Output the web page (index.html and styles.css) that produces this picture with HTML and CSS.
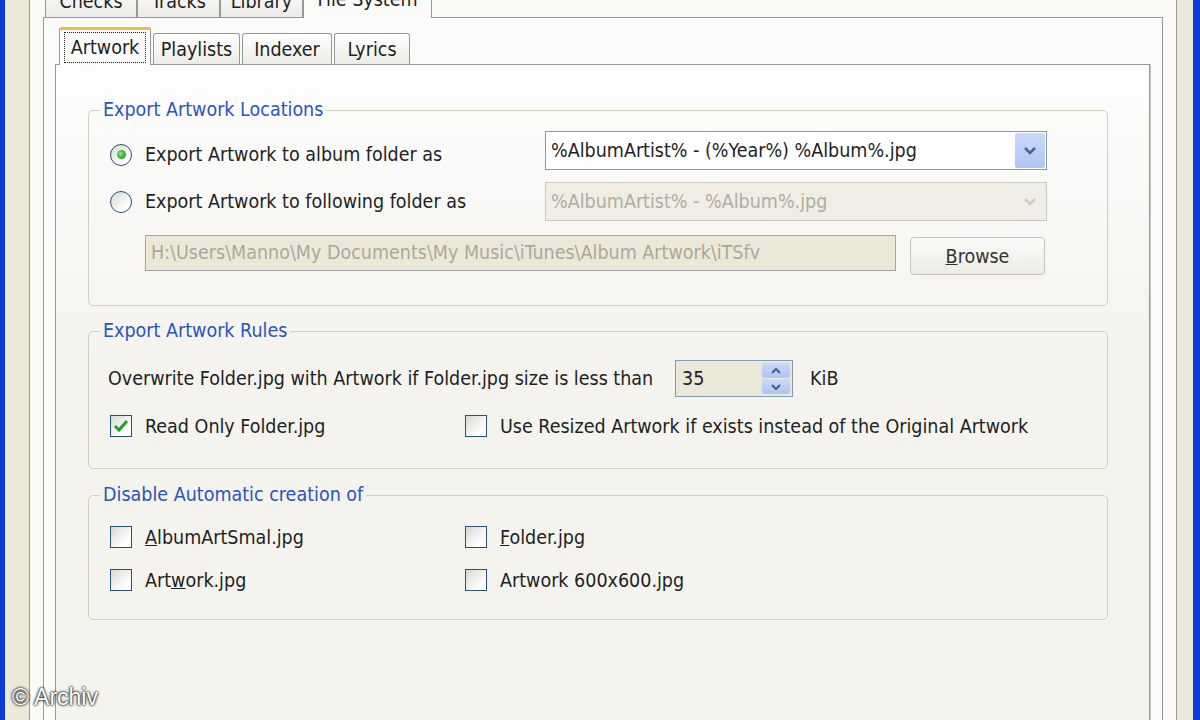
FILE: index.html
```html
<!DOCTYPE html>
<html>
<head>
<title>Options - File System</title>
<link rel="stylesheet" href="styles.css">
</head>
<body>

<div class="window">
  <div class="frame">

    <div class="tabs outer-tabs">
      <div class="tab">Checks</div>
      <div class="tab">Tracks</div>
      <div class="tab">Library</div>
      <div class="tab active">File System</div>
    </div>

    <div class="outer-panel">

      <div class="tabs inner-tabs">
        <div class="tab active"><span class="focus">Artwork</span></div>
        <div class="tab">Playlists</div>
        <div class="tab">Indexer</div>
        <div class="tab">Lyrics</div>
      </div>

      <div class="inner-panel">

        <fieldset class="group group-locations">
          <legend>Export Artwork Locations</legend>
          <div class="locations">
            <label class="option first">
              <span class="radio checked"></span>
              Export Artwork to album folder as
            </label>
            <div class="combo">
              <span class="combo-text">%AlbumArtist% - (%Year%) %Album%.jpg</span>
              <span class="combo-btn">
                <svg width="14" height="10" viewBox="0 0 14 10"><path d="M2 2 L7 7 L12 2" fill="none" stroke="#4d6185" stroke-width="2.6"/></svg>
              </span>
            </div>

            <label class="option">
              <span class="radio"></span>
              Export Artwork to following folder as
            </label>
            <div class="combo disabled">
              <span class="combo-text">%AlbumArtist% - %Album%.jpg</span>
              <span class="combo-btn">
                <svg width="14" height="10" viewBox="0 0 14 10"><path d="M2 2 L7 7 L12 2" fill="none" stroke="#cfcdc2" stroke-width="2.6"/></svg>
              </span>
            </div>

            <div class="path-row">
              <div class="textbox disabled">H:\Users\Manno\My Documents\My Music\iTunes\Album Artwork\iTSfv</div>
              <button class="button"><u>B</u>rowse</button>
            </div>
          </div>
        </fieldset>

        <fieldset class="group group-rules">
          <legend>Export Artwork Rules</legend>
          <div class="size-row">
            <span>Overwrite Folder.jpg with Artwork if Folder.jpg size is less than</span>
            <div class="spin">
              <span class="spin-value">35</span>
              <span class="spin-btns">
                <span class="spin-btn">
                  <svg width="12" height="8" viewBox="0 0 12 8"><path d="M2 6 L6 2 L10 6" fill="none" stroke="#4d6185" stroke-width="2.2"/></svg>
                </span>
                <span class="spin-btn">
                  <svg width="12" height="8" viewBox="0 0 12 8"><path d="M2 2 L6 6 L10 2" fill="none" stroke="#4d6185" stroke-width="2.2"/></svg>
                </span>
              </span>
            </div>
            <span class="unit">KiB</span>
          </div>
          <div class="check-grid">
            <label class="option">
              <span class="check checked">
                <svg width="16" height="14" viewBox="0 0 16 14"><path d="M2 7 L6 11 L14 2" fill="none" stroke="#21a121" stroke-width="3"/></svg>
              </span>
              Read Only Folder.jpg
            </label>
            <label class="option">
              <span class="check"></span>
              Use Resized Artwork if exists instead of the Original Artwork
            </label>
          </div>
        </fieldset>

        <fieldset class="group group-disable">
          <legend>Disable Automatic creation of</legend>
          <div class="check-grid">
            <label class="option"><span class="check"></span><span><u>A</u>lbumArtSmal.jpg</span></label>
            <label class="option"><span class="check"></span><span><u>F</u>older.jpg</span></label>
            <label class="option"><span class="check"></span><span>Art<u>w</u>ork.jpg</span></label>
            <label class="option"><span class="check"></span><span>Artwork 600x600.jpg</span></label>
          </div>
        </fieldset>

      </div>
    </div>
  </div>

  <div class="credit">&copy; Archiv</div>
</div>

</body>
</html>
```

FILE: styles.css
```css
body {
  margin: 0;
  font-family: "DejaVu Sans Condensed", "Liberation Sans", sans-serif;
  font-size: 19.5px;
  color: #1f1f1f;
}

.window {
  position: relative;
  width: 1200px;
  height: 720px;
  box-sizing: border-box;
  display: flex;
  overflow: hidden;
  background: #ece9d8;
  border-left: 5px solid #0b3cd8;
  border-right: 7px solid #0b3cd8;
  padding: 0 16px 0 24px;
}

.frame {
  flex: 1;
  display: flex;
  flex-direction: column;
  border-left: 1px solid #9c9c96;
  border-right: 1px solid #9c9c96;
  background: #fafaf7;
  padding: 0 13px;
}

/* tabs */

.tabs {
  display: flex;
  align-items: flex-end;
}

.tab {
  display: flex;
  align-items: center;
  justify-content: center;
  box-sizing: border-box;
  border: 1px solid #919b9c;
  border-bottom: none;
  border-radius: 3px 3px 0 0;
  background: linear-gradient(#ffffff, #ecebe6);
  margin-right: 2px;
  white-space: nowrap;
}

.tab.active {
  position: relative;
  z-index: 1;
  margin-bottom: -1px;
  background: #fcfcfd;
  border-top: 3px solid #f5b748;
}

.outer-tabs {
  height: 39px;
  margin: -22px 0 0 2px;
}

.outer-tabs .tab {
  height: 33px;
  margin-right: 0;
}

.outer-tabs .tab:nth-child(1) { width: 92px; }
.outer-tabs .tab:nth-child(2) { width: 83px; }
.outer-tabs .tab:nth-child(3) { width: 83px; }
.outer-tabs .tab:nth-child(4) { width: 129px; }

.outer-tabs .tab.active {
  height: 40px;
  background: #fbfbf9;
  border-top-color: #919b9c;
}

.outer-panel {
  flex: 1;
  display: flex;
  flex-direction: column;
  border: 1px solid #919b9c;
  border-bottom: none;
  background: #fbfbf9;
  padding: 9px 12px 0 11px;
}

.inner-tabs {
  height: 37px;
  margin-left: 4px;
}

.inner-tabs .tab {
  height: 31px;
}

.inner-tabs .tab:nth-child(1) { width: 92px; }
.inner-tabs .tab:nth-child(2) { width: 87px; }
.inner-tabs .tab:nth-child(3) { width: 90px; }
.inner-tabs .tab:nth-child(4) { width: 76px; }

.inner-tabs .tab.active {
  height: 38px;
}

.focus {
  padding: 3px 6px;
  outline: 1px dotted #222;
}

.inner-panel {
  flex: 1;
  border: 1px solid #919b9c;
  border-bottom: none;
  box-shadow: 1px 0 0 #cbcac2;
  background: linear-gradient(#fdfdfd, #f4f3ee 45%);
  padding: 33px 41px 0 32px;
}

/* group boxes */

.group {
  margin: 0 0 14px;
  border: 1px solid #d0d0bf;
  border-radius: 5px;
  padding: 9px 60px 33px 20px;
  min-width: 0;
}

.group legend {
  color: #2b55bc;
  line-height: 24px;
  padding: 0 3px;
  margin-left: -9px;
}

.group-locations {
  margin-bottom: 13px;
}

.group-rules {
  padding: 17px 60px 27px 20px;
}

.group-disable {
  padding: 15px 60px 24px 20px;
}

.option {
  display: flex;
  align-items: center;
  gap: 13px;
  white-space: nowrap;
}

.option.first {
  margin-top: 8px;
}

.radio,
.check {
  flex: none;
  width: 22px;
  height: 22px;
  box-sizing: border-box;
  margin-left: 1px;
  border: 1px solid #2a4f78;
  background: linear-gradient(135deg, #d8d8d2, #ffffff 75%);
  display: flex;
  align-items: center;
  justify-content: center;
}

.radio {
  border-radius: 50%;
}

.radio.checked::after {
  content: "";
  width: 9px;
  height: 9px;
  border-radius: 50%;
  background: radial-gradient(circle at 40% 40%, #8ee08e, #21a121 70%);
}

.locations {
  display: grid;
  grid-template-columns: 436px 502px;
  grid-auto-rows: 39px;
  row-gap: 12px;
}

.combo {
  display: flex;
  align-items: center;
  box-sizing: border-box;
  border: 1px solid #7f9db9;
  background: #fff;
  padding: 1px;
}

.combo-text {
  flex: 1;
  padding-left: 4px;
  white-space: nowrap;
}

.combo-btn {
  width: 30px;
  height: 35px;
  border-radius: 2px;
  background: linear-gradient(#cad9fd, #b0c5f4);
  display: flex;
  align-items: center;
  justify-content: center;
}

.combo.disabled {
  border-color: #cbc9bc;
  background: #f0eee4;
  color: #b0ad9f;
}

.combo.disabled .combo-btn {
  background: #efeee8;
}

.path-row {
  grid-column: 1 / -1;
  display: flex;
  align-items: flex-start;
  gap: 14px;
  margin: 2px 0 0 36px;
}

.textbox {
  width: 751px;
  height: 36px;
  box-sizing: border-box;
  border: 1px solid #a3a6a8;
  padding: 0 5px;
  line-height: 34px;
  white-space: nowrap;
  overflow: hidden;
}

.textbox.disabled {
  background: #ebe8da;
  color: #aca899;
}

.button {
  width: 135px;
  height: 38px;
  margin-top: 2px;
  font: inherit;
  color: #333;
  border: 1px solid #c6c4b6;
  border-radius: 4px;
  background: linear-gradient(#fbfbf9, #ecebe5);
}

/* rules */

.size-row {
  display: grid;
  grid-template-columns: 567px 118px auto;
  align-items: center;
  height: 37px;
  margin-left: -1px;
  white-space: nowrap;
}

.spin {
  display: flex;
  height: 37px;
  box-sizing: border-box;
  border: 1px solid #7f9db9;
  background: #ebe8da;
  padding: 2px;
}

.spin-value {
  flex: 1;
  padding-left: 4px;
  line-height: 31px;
}

.spin-btns {
  width: 28px;
  display: flex;
  flex-direction: column;
  gap: 1px;
}

.spin-btn {
  flex: 1;
  border-radius: 2px;
  background: linear-gradient(#cad9fd, #b0c5f4);
  display: flex;
  align-items: center;
  justify-content: center;
}

.unit {
  margin-left: 17px;
}

.check-grid {
  display: grid;
  grid-template-columns: 355px 1fr;
  grid-auto-rows: 30px;
  row-gap: 13px;
}

.group-rules .check-grid {
  margin-top: 14px;
}

.credit {
  position: absolute;
  left: 7px;
  top: 684px;
  font-family: "Liberation Sans", sans-serif;
  font-size: 23px;
  color: #fff;
  text-shadow: 0 0 3px #000, 0 0 2px #000;
}
```
